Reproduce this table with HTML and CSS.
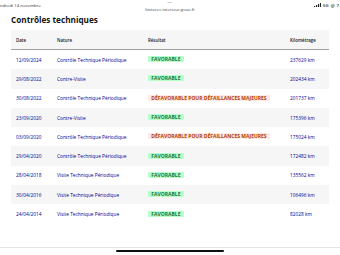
FILE: index.html
```html
<!DOCTYPE html>
<html lang="fr">
<head>
<meta charset="utf-8">
<title>Contrôles techniques</title>
<link rel="stylesheet" href="styles.css">
</head>
<body>
<div class="status">
  <span class="status-date">ndredi 14 novembre</span>
  <div class="status-center">
    <span class="dots">•••</span>
    <span class="url">historec.interieur.gouv.fr</span>
  </div>
  <span class="status-right">
    <svg class="signal" width="7" height="4" viewBox="0 0 7 4"><rect x="0" y="3" width="1.2" height="1" fill="#222"/><rect x="2" y="2" width="1.2" height="2" fill="#222"/><rect x="4" y="1" width="1.2" height="3" fill="#222"/><rect x="6" y="0" width="1" height="4" fill="#222"/></svg>
    <span>5G</span>
    <span>@</span>
    <span>7</span>
  </span>
</div>
<main class="page">
  <h1 class="title">Contrôles techniques</h1>
  <div class="table">
    <div class="row head">
      <span>Date</span><span>Nature</span><span>Résultat</span><span>Kilométrage</span>
    </div>
    <div class="row">
      <span class="link">12/09/2024</span><span class="link">Contrôle Technique Périodique</span><span><em class="badge ok">Favorable</em></span><span class="link">237629 km</span>
    </div>
    <div class="row alt">
      <span class="link">29/08/2022</span><span class="link">Contre-Visite</span><span><em class="badge ok">Favorable</em></span><span class="link">202434 km</span>
    </div>
    <div class="row">
      <span class="link">30/08/2022</span><span class="link">Contrôle Technique Périodique</span><span><em class="badge ko">Défavorable pour défaillances majeures</em></span><span class="link">201737 km</span>
    </div>
    <div class="row alt">
      <span class="link">23/09/2020</span><span class="link">Contre-Visite</span><span><em class="badge ok">Favorable</em></span><span class="link">175396 km</span>
    </div>
    <div class="row">
      <span class="link">03/09/2020</span><span class="link">Contrôle Technique Périodique</span><span><em class="badge ko">Défavorable pour défaillances majeures</em></span><span class="link">175024 km</span>
    </div>
    <div class="row alt">
      <span class="link">29/04/2020</span><span class="link">Contrôle Technique Périodique</span><span><em class="badge ok">Favorable</em></span><span class="link">172482 km</span>
    </div>
    <div class="row">
      <span class="link">28/04/2018</span><span class="link">Visite Technique Périodique</span><span><em class="badge ok">Favorable</em></span><span class="link">135562 km</span>
    </div>
    <div class="row alt">
      <span class="link">30/04/2016</span><span class="link">Visite Technique Périodique</span><span><em class="badge ok">Favorable</em></span><span class="link">106496 km</span>
    </div>
    <div class="row">
      <span class="link">24/04/2014</span><span class="link">Visite Technique Périodique</span><span><em class="badge ok">Favorable</em></span><span class="link">82028 km</span>
    </div>
  </div>
</main>
<div class="footer">
  <div class="home"></div>
</div>
</body>
</html>
```
FILE: styles.css
```css
html, body {
  margin: 0;
  padding: 0;
}
body {
  width: 340px;
  height: 255px;
  overflow: hidden;
  background: #ffffff;
  font-family: "Open Sans", "Liberation Sans", sans-serif;
  color: #161616;
}
.status {
  height: 14px;
  display: grid;
  grid-template-columns: 1fr auto 1fr;
  font-size: 4.3px;
  color: #333;
}
.status-date {
  padding-top: 2px;
  line-height: 6px;
}
.status-center {
  display: flex;
  flex-direction: column;
  align-items: center;
}
.dots {
  font-size: 3px;
  line-height: 6px;
  color: #777;
  letter-spacing: 0.5px;
}
.url {
  line-height: 6px;
  color: #444;
}
.status-right {
  display: flex;
  justify-content: flex-end;
  align-items: center;
  gap: 2px;
  height: 10px;
  padding-right: 1px;
  font-weight: 600;
  color: #222;
}
.page {
  padding: 0 11px;
  height: 234px;
  border-bottom: 1px solid #e5e5e5;
  box-sizing: border-box;
}
.title {
  margin: 0 0 4px;
  font-size: 8.2px;
  line-height: 12px;
  font-weight: 700;
  color: #161616;
}
.table {
  display: flex;
  flex-direction: column;
}
.row {
  display: grid;
  grid-template-columns: 41px 91px 142px 1fr;
  align-items: center;
  height: 19.3px;
  padding-left: 5px;
  font-size: 4.8px;
}
.row.head {
  height: 20px;
  background: #f6f6f6;
  font-size: 4.4px;
  font-weight: 600;
  color: #161616;
  border-bottom: 1px solid #a0a0a0;
  box-sizing: border-box;
}
.row.alt {
  background: #f6f6f6;
}
.link {
  color: #000091;
}
.badge {
  justify-self: start;
  font-style: normal;
  text-transform: uppercase;
  font-weight: 700;
  font-size: 5px;
  line-height: 7px;
  padding: 0 3.3px;
  border-radius: 1px;
}
.badge.ok {
  background: #b8fec9;
  color: #18753c;
}
.badge.ko {
  background: #ffe9e6;
  color: #b34000;
}
.footer {
  height: 7px;
  display: flex;
  justify-content: center;
  align-items: flex-end;
  background: #ffffff;
}
.home {
  width: 108px;
  height: 2px;
  border-radius: 1px;
  background: #111;
  margin-bottom: 3px;
}
```
